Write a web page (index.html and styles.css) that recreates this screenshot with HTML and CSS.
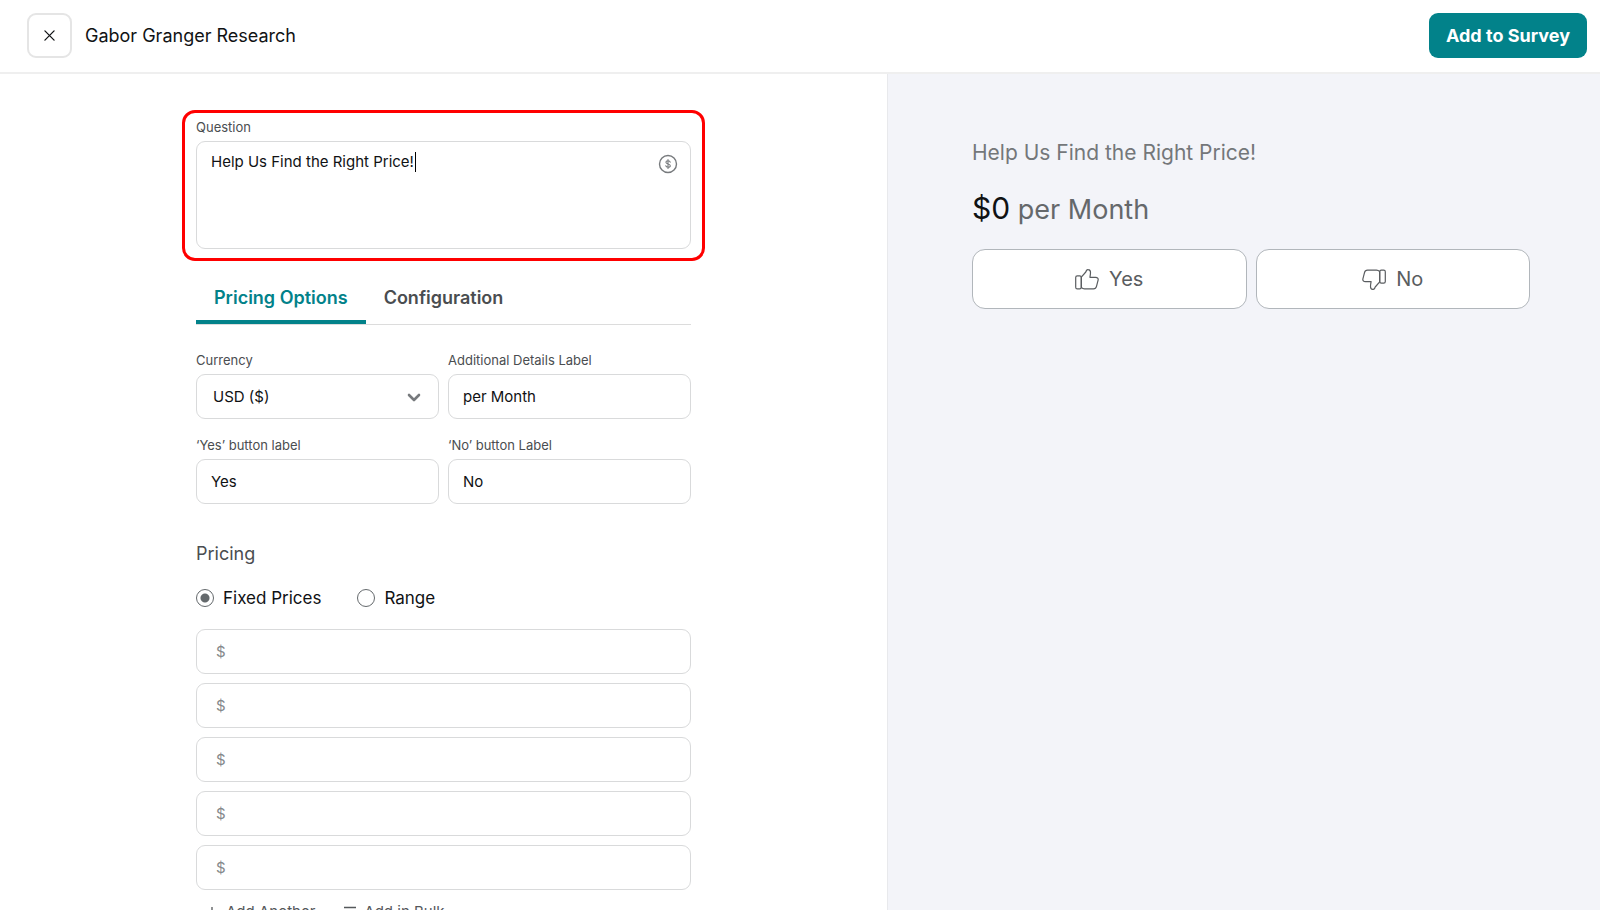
FILE: index.html
```html
<!DOCTYPE html>
<html lang="en">
<head>
<meta charset="utf-8">
<meta name="viewport" content="width=device-width, initial-scale=1">
<title>Gabor Granger Research</title>
<link rel="stylesheet" href="styles.css">
</head>
<body>
<header class="topbar">
  <button class="close" type="button" aria-label="Close">
    <svg width="11" height="11" viewBox="0 0 12 12" fill="none" stroke="currentColor" stroke-width="1.4" stroke-linecap="round"><path d="M1 1l10 10M11 1L1 11"/></svg>
  </button>
  <h1 class="title">Gabor Granger Research</h1>
  <button class="primary" type="button">Add to Survey</button>
</header>
<main class="workspace">
  <section class="editor">
    <form class="form">
      <div class="question">
        <label class="label" for="question">Question</label>
        <div class="textarea-wrap">
          <textarea class="control textarea" id="question">Help Us Find the Right Price!</textarea>
          <span class="caret"></span>
          <button class="pipe" type="button" aria-label="Insert variable">
            <svg width="20" height="20" viewBox="0 0 20 20" fill="none" stroke="currentColor" stroke-linecap="round"><circle cx="10" cy="10" r="8.5" stroke-width="1.4"/><path d="M10 5.6v8.8M12.2 8.1c-.2-.9-1-1.4-2.2-1.4s-2.1.6-2.1 1.6c0 2.2 4.4 1.2 4.4 3.4 0 1-.9 1.6-2.2 1.6s-2.2-.6-2.4-1.6" stroke-width="1.1"/></svg>
          </button>
        </div>
      </div>
      <nav class="tabs">
        <button class="tab tab-active" type="button">Pricing Options</button>
        <button class="tab" type="button">Configuration</button>
      </nav>
      <div class="fields">
        <div class="field">
          <label class="label" for="currency">Currency</label>
          <div class="select-wrap">
            <select class="control select" id="currency"><option>USD ($)</option></select>
            <svg class="chevron" width="14" height="9" viewBox="0 0 14 9" fill="none" stroke="currentColor" stroke-width="2.6" stroke-linecap="round" stroke-linejoin="round"><path d="M2 2l5 5 5-5"/></svg>
          </div>
        </div>
        <div class="field">
          <label class="label" for="details">Additional Details Label</label>
          <input class="control" id="details" type="text" value="per Month">
        </div>
        <div class="field">
          <label class="label" for="yes">‘Yes’ button label</label>
          <input class="control" id="yes" type="text" value="Yes">
        </div>
        <div class="field">
          <label class="label" for="no">‘No’ button Label</label>
          <input class="control" id="no" type="text" value="No">
        </div>
      </div>
      <h2 class="heading">Pricing</h2>
      <div class="radios">
        <label class="radio"><input type="radio" name="mode" checked>Fixed Prices</label>
        <label class="radio"><input type="radio" name="mode">Range</label>
      </div>
      <div class="prices">
        <input class="control price" type="text" placeholder="$" aria-label="Price 1">
        <input class="control price" type="text" placeholder="$" aria-label="Price 2">
        <input class="control price" type="text" placeholder="$" aria-label="Price 3">
        <input class="control price" type="text" placeholder="$" aria-label="Price 4">
        <input class="control price" type="text" placeholder="$" aria-label="Price 5">
      </div>
      <div class="actions">
        <button class="link" type="button"><svg width="12" height="12" viewBox="0 0 12 12" fill="none" stroke="currentColor" stroke-width="1.3"><path d="M6 1v10M1 6h10"/></svg>Add Another</button>
        <button class="link" type="button"><svg width="12" height="12" viewBox="0 0 12 12" fill="none" stroke="currentColor" stroke-width="1.3"><path d="M0 1.500h12M0 6h12M0 10.500h12"/></svg>Add in Bulk</button>
      </div>
    </form>
  </section>
  <section class="preview">
    <p class="preview-question">Help Us Find the Right Price!</p>
    <p class="preview-price"><span class="amount">$0</span> per Month</p>
    <div class="answers">
      <button class="answer" type="button">
        <svg width="24" height="21" viewBox="0 0 24 21" fill="none" stroke="currentColor" stroke-width="1.2" stroke-linejoin="round"><rect x=".7" y="6.8" width="5.6" height="13" rx="1.6"/><path d="M6.3 8.2L10.8 3c.4-.5.3-.9.6-1.4.4-.7 1.1-1 1.900-.9 1.500.1 2.200 1.300 2.200 2.900 0 1.600-.3 3.100-.6 4.700h5.700c1.800 0 2.900 1.200 2.500 2.900l-1.600 6.200c-.4 1.500-1.400 2.400-3 2.400H9.500c-1.600 0-2.400-.6-3.200-1.500z"/></svg>Yes</button>
      <button class="answer" type="button">
        <svg width="24" height="21" viewBox="0 0 24 21" fill="none" stroke="currentColor" stroke-width="1.2" stroke-linejoin="round"><g transform="rotate(180 12 10.5)"><rect x=".7" y="6.8" width="5.6" height="13" rx="1.6"/><path d="M6.3 8.2L10.8 3c.4-.5.3-.9.6-1.4.4-.7 1.1-1 1.900-.9 1.500.1 2.200 1.300 2.200 2.900 0 1.600-.3 3.100-.6 4.700h5.700c1.800 0 2.900 1.200 2.500 2.900l-1.600 6.200c-.4 1.500-1.400 2.400-3 2.400H9.500c-1.600 0-2.400-.6-3.200-1.500z"/></g></svg>No</button>
    </div>
  </section>
</main>
</body>
</html>
```
FILE: styles.css
```css
* { box-sizing: border-box; }
body {
  margin: 0;
  height: 100vh;
  display: flex;
  flex-direction: column;
  overflow: hidden;
  background: #fff;
  color: #101214;
  font-family: Inter, "Liberation Sans", sans-serif;
  font-size: 15px;
}
h1, h2, p { margin: 0; font-weight: 400; }
button, input, select, textarea { font: inherit; color: inherit; }
button { background: none; border: 0; padding: 0; cursor: pointer; }

.topbar {
  display: flex;
  align-items: center;
  flex: none;
  gap: 13px;
  padding: 13px 13px 14px 27px;
  border-bottom: 2px solid #efefef;
}
.close {
  display: grid;
  place-items: center;
  width: 45px;
  height: 45px;
  border: 2px solid #e5e5e5;
  border-radius: 9px;
}
.title { flex: 1; font-size: 18px; line-height: 24px; }
.primary {
  height: 45px;
  padding: 0 17px;
  border-radius: 9px;
  background: #02828a;
  color: #fff;
  font-size: 18px;
  font-weight: 700;
}

.workspace {
  display: grid;
  grid-template-columns: minmax(0, 887fr) minmax(0, 713fr);
  grid-template-rows: minmax(0, 1fr);
  flex: 1;
  min-height: 0;
}
.editor {
  padding: 36px 24px 0;
  overflow-y: auto;
  scrollbar-width: none;
}
.form { max-width: 495px; margin: 0 auto; }
.label { display: block; color: #4a4d50; font-size: 13px; line-height: 18px; }
.control {
  display: block;
  width: 100%;
  height: 45px;
  padding: 0 14px;
  border: 1px solid #d9dadb;
  border-radius: 9px;
  background: #fff;
  outline: none;
}
.question {
  margin: 0 -14px;
  padding: 5px 11px 9px;
  border: 3px solid #f00;
  border-radius: 13px;
}
.textarea-wrap { position: relative; margin-top: 5px; }
.textarea { height: 108px; padding: 10px 50px 10px 14px; line-height: 20px; resize: none; }
.caret { position: absolute; left: 219px; top: 11px; width: 1px; height: 20px; background: #000; }
.pipe { position: absolute; top: 13px; right: 13px; width: 20px; height: 20px; color: #777a7d; }
.pipe svg, .link svg { display: block; }

.tabs { display: flex; margin-top: 18px; border-bottom: 1px solid #dcdcdc; }
.tab {
  height: 45px;
  padding: 0 18px 4px;
  border-bottom: 4px solid transparent;
  color: #4a4d50;
  font-size: 18px;
  font-weight: 600;
}
.tab-active { border-color: #02828a; color: #02828a; }

.fields { display: grid; grid-template-columns: 1fr 1fr; gap: 17px 9px; margin-top: 26px; }
.field { display: flex; flex-direction: column; gap: 5px; }
.select-wrap { position: relative; }
.select { appearance: none; padding: 0 40px 0 16px; }
.chevron { position: absolute; right: 18px; top: 19px; color: #777a7d; pointer-events: none; }

.heading { margin-top: 38px; color: #4a4d50; font-size: 18px; line-height: 24px; }
.radios { display: flex; gap: 36px; margin-top: 20px; font-size: 17px; line-height: 24px; }
.radio { display: flex; align-items: center; gap: 9px; }
.radio input {
  appearance: none;
  width: 18px;
  height: 18px;
  margin: 0;
  border: 1px solid #64696c;
  border-radius: 50%;
}
.radio input:checked { background: radial-gradient(circle, #64696c 4px, transparent 5px); }
.prices { display: grid; gap: 9px; margin-top: 19px; }
.price { padding-left: 19px; }
.price::placeholder { color: #85888b; opacity: 1; }
.actions { display: flex; gap: 29px; padding: 12px 10px 24px; color: #55585b; }
.link { display: flex; align-items: center; gap: 8px; line-height: 20px; }

.preview {
  padding: 64px 70px 0 84px;
  border-left: 1px solid #e8e9ec;
  background: #f3f4f9;
}
.preview-question { color: #74777a; font-size: 21px; line-height: 30px; }
.preview-price { margin-top: 20px; color: #65686b; font-size: 27px; line-height: 40px; }
.amount { color: #101214; font-size: 30px; }
.answers { display: grid; grid-template-columns: 1fr 1fr; gap: 9px; margin-top: 19px; }
.answer {
  display: flex;
  align-items: center;
  justify-content: center;
  gap: 10px;
  height: 60px;
  border: 1px solid #b1b6bb;
  border-radius: 13px;
  background: #fff;
  color: #5a5d60;
  font-size: 20px;
}
```
